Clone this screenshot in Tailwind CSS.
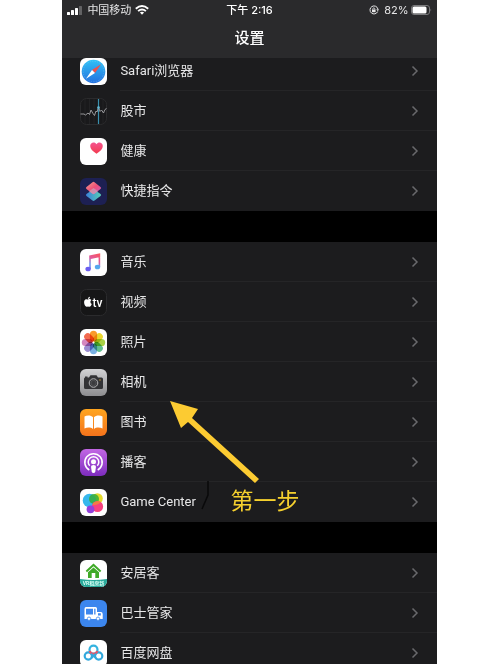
<!DOCTYPE html>
<html lang="zh-CN">
<head>
    <meta charset="UTF-8">
    <meta name="viewport" content="width=device-width, initial-scale=1.0">
    <title>设置</title>
    <script src="https://cdn.jsdelivr.net/npm/@tailwindcss/browser@4"></script>
</head>
<body class="bg-white pr-px font-['Inter','Noto_Sans_CJK_SC',sans-serif]">
    <svg class="hidden">
        <symbol id="chevron" viewBox="0 0 8 12">
            <path d="M1.500 1.500 6 6 1.500 10.500" fill="none" stroke="#69696c" stroke-width="1.500"/>
        </symbol>
    </svg>
    <div class="mx-auto flex h-screen w-3/4 flex-col overflow-hidden bg-black text-[#e6e6e7]">
        <header class="z-10 shrink-0 bg-[#2a2a2c] pb-[7px]">
            <div class="grid h-5 grid-cols-[1fr_auto_1fr] items-center px-[5px] text-[11px] leading-4">
                <div class="flex items-center gap-1">
                    <svg class="h-[9px] w-4" viewBox="0 0 16 9" fill="#fff">
                        <rect x="0" y="6" width="3" height="3" rx=".6"/>
                        <rect x="4" y="4" width="3" height="5" rx=".6"/>
                        <rect x="8" y="2" width="3" height="7" rx=".6"/>
                        <rect x="12" y="0" width="3" height="9" rx=".6" fill="#626264"/>
                    </svg>
                    <span>中国移动</span>
                    <svg class="h-[10px] w-[14px]" viewBox="0 0 14 10" fill="none" stroke="#fff" stroke-width="1.900">
                        <path d="M.8 3.700Q7-1.700 13.200 3.700M3.100 6.100Q7 2.700 10.900 6.100"/>
                        <path d="M7 9.800 4.900 7.600Q7 5.900 9.100 7.600Z" fill="#fff" stroke="none"/>
                    </svg>
                </div>
                <span class="font-medium text-white">下午 2:16</span>
                <div class="flex items-center justify-end gap-[2px]">
                    <svg class="mr-[3px] h-[10px] w-[10px]" viewBox="0 0 10 10" fill="none" stroke="#e6e6e7">
                        <path d="M8.700 6.500A4 4 0 1 1 8.900 4"/>
                        <path d="M7.300 4.300H10L8.800 6.300Z" fill="#e6e6e7" stroke="none"/>
                        <rect x="3" y="4.600" width="3.600" height="2.600" fill="#e6e6e7" stroke="none"/>
                        <path d="M3.800 4.800V3.900a1 1 0 0 1 2 0v.9" stroke-width=".8"/>
                    </svg>
                    <span>82%</span>
                    <svg class="h-[10px] w-[21px]" viewBox="0 0 21 10">
                        <rect x=".5" y=".5" width="18" height="9" rx="2.500" fill="none" stroke="#7a7a7c"/>
                        <rect x="1.500" y="1.500" width="14" height="7" rx="1.500" fill="#fff"/>
                        <path d="M19.500 3.500q1.500 1.500 0 3Z" fill="#7a7a7c"/>
                    </svg>
                </div>
            </div>
            <h1 class="pt-[5px] text-center text-[15px] leading-[26px] font-medium text-white">设置</h1>
        </header>

        <main class="min-h-0 flex-1 overflow-hidden font-['Roboto','Noto_Sans_CJK_SC',sans-serif]">
            <div class="-mt-[7px] space-y-[31px]">
                <ul class="bg-[#1c1c1e] text-[13px]">
                    <li>
                        <a href="#" class="flex h-10 items-center gap-[13px] pl-[18px]">
                            <svg class="size-[27px] shrink-0" viewBox="0 0 27 27">
                                <defs><linearGradient id="safari" x2="0" y2="1"><stop stop-color="#31c1f5"/><stop offset="1" stop-color="#2370df"/></linearGradient></defs>
                                <rect width="27" height="27" rx="6" fill="#fff"/>
                                <circle cx="13.500" cy="13.500" r="11.800" fill="url(#safari)"/>
                                <circle cx="13.500" cy="13.500" r="10.300" fill="none" stroke="#a8dcf8" stroke-width="1" stroke-dasharray=".4 1.400" opacity=".6"/>
                                <path d="M21 6.300 12 12 15 15Z" fill="#f0514b"/>
                                <path d="M6 20.700 12 12 15 15Z" fill="#fff"/>
                            </svg>
                            <span class="flex h-full flex-1 items-center justify-between border-b border-[#252527] pr-[18px]">Safari浏览器<svg class="h-3 w-2"><use href="#chevron"/></svg></span>
                        </a>
                    </li>
                    <li>
                        <a href="#" class="flex h-10 items-center gap-[13px] pl-[18px]">
                            <svg class="size-[27px] shrink-0" viewBox="0 0 27 27">
                                <rect x=".5" y=".5" width="26" height="26" rx="6" fill="#19191b" stroke="#2b2b2d"/>
                                <path d="M5 1v25M9.500 1v25M14 1v25M23 1v25" stroke="#29292b" stroke-width=".6"/>
                                <path d="M18.500 1v25" stroke="#3a90ae" stroke-width="1.200"/>
                                <path d="M.5 16H4l1.500 1L8 15l1.500 1.500L11 12l2 3.500 1.500 2L16 13l1 1 1.500-5 1.500 4.500 1.500-1.500 2 3 1.500-3.500 1.500-1" fill="none" stroke="#a5a5a8" stroke-width=".9"/>
                                <circle cx="18.500" cy="9.500" r="1.300" fill="#5fb8d4"/>
                            </svg>
                            <span class="flex h-full flex-1 items-center justify-between border-b border-[#252527] pr-[18px]">股市<svg class="h-3 w-2"><use href="#chevron"/></svg></span>
                        </a>
                    </li>
                    <li>
                        <a href="#" class="flex h-10 items-center gap-[13px] pl-[18px]">
                            <svg class="size-[27px] shrink-0" viewBox="0 0 27 27">
                                <defs><linearGradient id="heart" x2="0" y2="1"><stop stop-color="#f5548f"/><stop offset="1" stop-color="#f23a4e"/></linearGradient></defs>
                                <rect width="27" height="27" rx="6" fill="#fff"/>
                                <path d="M16.500 15.800C12.500 13 10.200 10.800 10.200 8c0-3.800 4.700-4.700 6.300-1.700C18.100 3.300 22.800 4.200 22.800 8c0 2.800-2.300 5-6.300 7.800Z" fill="url(#heart)"/>
                            </svg>
                            <span class="flex h-full flex-1 items-center justify-between border-b border-[#252527] pr-[18px]">健康<svg class="h-3 w-2"><use href="#chevron"/></svg></span>
                        </a>
                    </li>
                    <li>
                        <a href="#" class="flex h-10 items-center gap-[13px] pl-[18px]">
                            <svg class="size-[27px] shrink-0" viewBox="0 0 27 27">
                                <defs>
                                    <linearGradient id="cutA" x2="1" y2="1"><stop stop-color="#f5a08d"/><stop offset=".5" stop-color="#ef5078"/><stop offset="1" stop-color="#c75bc8"/></linearGradient>
                                    <linearGradient id="cutB" x2="1" y2="0"><stop stop-color="#3a80dc"/><stop offset="1" stop-color="#57cfb5"/></linearGradient>
                                </defs>
                                <rect width="27" height="27" rx="6" fill="#1d2053"/>
                                <path d="m13.500 11 7 5q1.300 1 0 2l-6 4.600q-1 .7-2 0l-6-4.600q-1.300-1 0-2Z" fill="url(#cutB)"/>
                                <path d="m12.500 4.200-6 4.800q-1.300 1 0 2l6 4.800q1 .7 2 0l6-4.800q1.300-1 0-2l-6-4.800q-1-.7-2 0Z" fill="url(#cutA)"/>
                                <path d="m9 13.200 4.500-3.200 4.500 3.200-3.500 2.600q-1 .7-2 0Z" fill="#c9a6bb" opacity=".7"/>
                            </svg>
                            <span class="flex h-full flex-1 items-center justify-between pr-[18px]">快捷指令<svg class="h-3 w-2"><use href="#chevron"/></svg></span>
                        </a>
                    </li>
                </ul>

                <div class="relative">
                    <ul class="bg-[#1c1c1e] text-[13px]">
                        <li>
                            <a href="#" class="flex h-10 items-center gap-[13px] pl-[18px]">
                                <svg class="size-[27px] shrink-0" viewBox="0 0 27 27">
                                    <defs><linearGradient id="music" gradientUnits="userSpaceOnUse" x1="8" y1="22" x2="17" y2="4"><stop stop-color="#7b61f0"/><stop offset=".35" stop-color="#6f9bee"/><stop offset=".65" stop-color="#e05a9c"/><stop offset="1" stop-color="#fa5560"/></linearGradient></defs>
                                    <rect width="27" height="27" rx="6" fill="#fff"/>
                                    <path d="M9.200 6.500 20.200 4.300V8L10.800 10v10H9.200ZM18.600 5h1.600v13h-1.600Z" fill="url(#music)"/>
                                    <ellipse cx="8.100" cy="20" rx="2.700" ry="2.300" fill="#6b5df0"/>
                                    <ellipse cx="17.500" cy="18" rx="2.700" ry="2.300" fill="#54a9ee"/>
                                </svg>
                                <span class="flex h-full flex-1 items-center justify-between border-b border-[#252527] pr-[18px]">音乐<svg class="h-3 w-2"><use href="#chevron"/></svg></span>
                            </a>
                        </li>
                        <li>
                            <a href="#" class="flex h-10 items-center gap-[13px] pl-[18px]">
                                <svg class="size-[27px] shrink-0" viewBox="0 0 27 27">
                                    <rect x=".5" y=".5" width="26" height="26" rx="6" fill="#161617" stroke="#2b2b2d"/>
                                    <path d="M8.200 10.400c1-.6 2.600-.4 3.200.7-1.500 1-1.300 3.200.4 3.900-.5 1.500-1.400 2.700-2.300 2.700-.6 0-.9-.3-1.500-.3s-1 .3-1.500.3c-2.200-.2-3.600-6.300-.8-7.400 1-.4 1.700.1 2.500.1ZM7.900 10c0-1.300.9-2.200 2-2.300.1 1.300-.8 2.300-2 2.300Z" fill="#fff"/>
                                    <text x="12.500" y="17.700" font-size="12" font-weight="500" fill="#fff">tv</text>
                                </svg>
                                <span class="flex h-full flex-1 items-center justify-between border-b border-[#252527] pr-[18px]">视频<svg class="h-3 w-2"><use href="#chevron"/></svg></span>
                            </a>
                        </li>
                        <li>
                            <a href="#" class="flex h-10 items-center gap-[13px] pl-[18px]">
                                <svg class="size-[27px] shrink-0" viewBox="0 0 27 27">
                                    <rect width="27" height="27" rx="6" fill="#fff"/>
                                    <g class="*:mix-blend-multiply">
                                        <rect x="9.900" y="1.800" width="7.200" height="11" rx="3.600" fill="#f99a2c"/>
                                        <rect x="9.900" y="1.800" width="7.200" height="11" rx="3.600" fill="#ecd830" transform="rotate(45 13.500 13.500)"/>
                                        <rect x="9.900" y="1.800" width="7.200" height="11" rx="3.600" fill="#a9d247" transform="rotate(90 13.500 13.500)"/>
                                        <rect x="9.900" y="1.800" width="7.200" height="11" rx="3.600" fill="#62c091" transform="rotate(135 13.500 13.500)"/>
                                        <rect x="9.900" y="1.800" width="7.200" height="11" rx="3.600" fill="#78b0e2" transform="rotate(180 13.500 13.500)"/>
                                        <rect x="9.900" y="1.800" width="7.200" height="11" rx="3.600" fill="#9b8dd0" transform="rotate(225 13.500 13.500)"/>
                                        <rect x="9.900" y="1.800" width="7.200" height="11" rx="3.600" fill="#d587bf" transform="rotate(270 13.500 13.500)"/>
                                        <rect x="9.900" y="1.800" width="7.200" height="11" rx="3.600" fill="#f26a50" transform="rotate(315 13.500 13.500)"/>
                                    </g>
                                    <circle cx="13.500" cy="13.500" r="1" fill="#fff"/>
                                </svg>
                                <span class="flex h-full flex-1 items-center justify-between border-b border-[#252527] pr-[18px]">照片<svg class="h-3 w-2"><use href="#chevron"/></svg></span>
                            </a>
                        </li>
                        <li>
                            <a href="#" class="flex h-10 items-center gap-[13px] pl-[18px]">
                                <svg class="size-[27px] shrink-0" viewBox="0 0 27 27">
                                    <defs><linearGradient id="camera" x2="0" y2="1"><stop stop-color="#d2d2d4"/><stop offset="1" stop-color="#8d8d90"/></linearGradient></defs>
                                    <rect width="27" height="27" rx="6" fill="url(#camera)"/>
                                    <path d="M5 7.500h2.500V8.500H9L10.500 6.300h6L18 8.500h3.500q1.500 0 1.500 1.500v8.500q0 1.500-1.500 1.500h-16Q4 20 4 18.500V10q0-1.500 1-1.500Z" fill="#333336"/>
                                    <circle cx="13.500" cy="14" r="4.300" fill="#3b3b3e" stroke="#b2b2b4" stroke-width="1"/>
                                    <circle cx="13.500" cy="14" r="2.600" fill="none" stroke="#5c5c5f" stroke-width=".6"/>
                                    <circle cx="20" cy="11" r=".7" fill="#d9a83c"/>
                                </svg>
                                <span class="flex h-full flex-1 items-center justify-between border-b border-[#252527] pr-[18px]">相机<svg class="h-3 w-2"><use href="#chevron"/></svg></span>
                            </a>
                        </li>
                        <li>
                            <a href="#" class="flex h-10 items-center gap-[13px] pl-[18px]">
                                <svg class="size-[27px] shrink-0" viewBox="0 0 27 27">
                                    <defs><linearGradient id="books" x2="0" y2="1"><stop stop-color="#ffa51f"/><stop offset="1" stop-color="#f4731c"/></linearGradient></defs>
                                    <rect width="27" height="27" rx="6" fill="url(#books)"/>
                                    <path d="M13 8.200C11.300 6.300 7 6 4.500 7.500V19.500C7.200 18.200 11 18.300 13 20ZM14 8.200C15.700 6.300 20 6 22.500 7.500V19.500C19.800 18.200 16 18.300 14 20Z" fill="#fff"/>
                                </svg>
                                <span class="flex h-full flex-1 items-center justify-between border-b border-[#252527] pr-[18px]">图书<svg class="h-3 w-2"><use href="#chevron"/></svg></span>
                            </a>
                        </li>
                        <li>
                            <a href="#" class="flex h-10 items-center gap-[13px] pl-[18px]">
                                <svg class="size-[27px] shrink-0" viewBox="0 0 27 27">
                                    <defs><linearGradient id="podcast" x2="0" y2="1"><stop stop-color="#c267e4"/><stop offset="1" stop-color="#7d2cbe"/></linearGradient></defs>
                                    <rect width="27" height="27" rx="6" fill="url(#podcast)"/>
                                    <g fill="none" stroke="#fff" stroke-width="1.500">
                                        <path d="M9.300 21A8.700 8.700 0 1 1 17.700 21"/>
                                        <path d="M9.700 16.700A5.300 5.300 0 1 1 17.300 16.700"/>
                                    </g>
                                    <circle cx="13.500" cy="12.700" r="2.500" fill="#fff"/>
                                    <path d="M11 17.500Q11 16 13.500 16T16 17.500L15.300 22.500Q15 24 13.500 24T11.700 22.500Z" fill="#fff"/>
                                </svg>
                                <span class="flex h-full flex-1 items-center justify-between border-b border-[#252527] pr-[18px]">播客<svg class="h-3 w-2"><use href="#chevron"/></svg></span>
                            </a>
                        </li>
                        <li>
                            <a href="#" class="flex h-10 items-center gap-[13px] pl-[18px]">
                                <svg class="size-[27px] shrink-0" viewBox="0 0 27 27">
                                    <rect width="27" height="27" rx="6" fill="#fff"/>
                                    <circle cx="17.500" cy="9.500" r="5.300" fill="#e6dc2c"/>
                                    <circle cx="9.500" cy="11.500" r="6.800" fill="#36b8ed"/>
                                    <circle cx="14" cy="10" r="5" fill="#35ad39" opacity=".85"/>
                                    <circle cx="17.500" cy="17.500" r="5.600" fill="#f7417f"/>
                                    <path d="M13 14q4.500-3.500 8-1-3 3.500-8 3Z" fill="#f28a35" opacity=".8"/>
                                    <circle cx="10.500" cy="20.300" r="3.900" fill="#9340dc"/>
                                </svg>
                                <span class="flex h-full flex-1 items-center justify-between pr-[18px]">Game Center<svg class="h-3 w-2"><use href="#chevron"/></svg></span>
                            </a>
                        </li>
                    </ul>
                    <!-- step annotation -->
                    <svg class="pointer-events-none absolute top-0 left-0 h-[280px] w-[375px]" viewBox="0 0 375 280">
                        <path d="M108 159 136 167 130 176 197 237 193 241 126 180 119 186Z" fill="#fccb32"/>
                        <path d="M146 239V253L140 267" fill="none" stroke="#09090a" stroke-width="1.500"/>
                    </svg>
                    <p class="pointer-events-none absolute bottom-1 left-[168px] text-[23px] leading-8 text-[#f5d02e]">第一步</p>
                </div>

                <ul class="bg-[#1c1c1e] text-[13px]">
                    <li>
                        <a href="#" class="flex h-10 items-center gap-[13px] pl-[18px]">
                            <svg class="size-[27px] shrink-0" viewBox="0 0 27 27">
                                <defs><clipPath id="tile"><rect width="27" height="27" rx="6"/></clipPath></defs>
                                <g clip-path="url(#tile)">
                                    <rect width="27" height="27" fill="#fff"/>
                                    <path d="M0 19Q13.500 21 27 19V27H0Z" fill="#28a99a"/>
                                </g>
                                <path d="M13.500 3.500 21.300 10.800 20 12.200 13.500 6.300 7 12.200 5.700 10.800Z" fill="#3faa28"/>
                                <path d="M8 12.300 13.500 7.500 19 12.300V18H15.300V13H11.700V18H8Z" fill="#3faa28"/>
                                <text x="13.500" y="25.300" text-anchor="middle" font-size="5" font-weight="700" fill="#d8fff5">VR租房新</text>
                            </svg>
                            <span class="flex h-full flex-1 items-center justify-between border-b border-[#252527] pr-[18px]">安居客<svg class="h-3 w-2"><use href="#chevron"/></svg></span>
                        </a>
                    </li>
                    <li>
                        <a href="#" class="flex h-10 items-center gap-[13px] pl-[18px]">
                            <svg class="size-[27px] shrink-0" viewBox="0 0 27 27">
                                <rect width="27" height="27" rx="6" fill="#3c86ee"/>
                                <path d="M6 7H15.500Q17 7 17 8.500V12H21Q22.500 12 22.700 14V19H4.500V9Q4.500 7 6 7Z" fill="#fff"/>
                                <path d="M6 8.700H13V14.500H6ZM14.200 8.700H15.500V14.500H14.200ZM18 13.300H20.800V15.500H18Z" fill="#3c86ee"/>
                                <circle cx="9" cy="18.700" r="1.700" fill="#fff" stroke="#3c86ee" stroke-width=".8"/>
                                <circle cx="18" cy="18.700" r="1.700" fill="#fff" stroke="#3c86ee" stroke-width=".8"/>
                            </svg>
                            <span class="flex h-full flex-1 items-center justify-between border-b border-[#252527] pr-[18px]">巴士管家<svg class="h-3 w-2"><use href="#chevron"/></svg></span>
                        </a>
                    </li>
                    <li>
                        <a href="#" class="flex h-10 items-center gap-[13px] pl-[18px]">
                            <svg class="size-[27px] shrink-0" viewBox="0 0 27 27">
                                <rect width="27" height="27" rx="6" fill="#fff"/>
                                <g fill="none" stroke-width="2.200">
                                    <circle cx="8.300" cy="16" r="3.600" stroke="#32a8dd"/>
                                    <circle cx="18.700" cy="16" r="3.600" stroke="#32a8dd"/>
                                    <circle cx="13.500" cy="9.700" r="4" stroke="#35b3df"/>
                                    <path d="M9.700 11A4 4 0 0 0 17.300 11" stroke="#e85468"/>
                                    <path d="m11 13.700 5.500 5M16 13.700l-5 5" stroke="#32a8dd" stroke-width="1.700"/>
                                </g>
                            </svg>
                            <span class="flex h-full flex-1 items-center justify-between pr-[18px]">百度网盘<svg class="h-3 w-2"><use href="#chevron"/></svg></span>
                        </a>
                    </li>
                </ul>
            </div>
        </main>
    </div>
</body>
</html>
